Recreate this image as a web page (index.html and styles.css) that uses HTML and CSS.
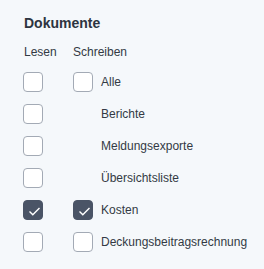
FILE: index.html
```html
<!DOCTYPE html>
<html lang="de">
<head>
    <meta charset="UTF-8">
    <meta name="viewport" content="width=device-width, initial-scale=1.0">
    <title>Dokumente</title>
    <link rel="stylesheet" href="styles.css">
</head>
<body>
    <div class="panel">
        <h3 class="title">Dokumente</h3>
        <div class="perm-head">
            <span class="col-read">Lesen</span>
            <span>Schreiben</span>
        </div>
        <div class="perm-list">
            <div class="perm-row">
                <span class="col-read"><span class="box"></span></span>
                <span class="box"></span>
                <span class="label">Alle</span>
            </div>
            <div class="perm-row">
                <span class="col-read"><span class="box"></span></span>
                <span class="box-spacer"></span>
                <span class="label">Berichte</span>
            </div>
            <div class="perm-row">
                <span class="col-read"><span class="box"></span></span>
                <span class="box-spacer"></span>
                <span class="label">Meldungsexporte</span>
            </div>
            <div class="perm-row">
                <span class="col-read"><span class="box"></span></span>
                <span class="box-spacer"></span>
                <span class="label">Übersichtsliste</span>
            </div>
            <div class="perm-row">
                <span class="col-read"><span class="box checked"><svg viewBox="0 0 18 18"><path d="M5.5 10.5l3.3 3.3 6.7-6.8"/></svg></span></span>
                <span class="box checked"><svg viewBox="0 0 18 18"><path d="M5.5 10.5l3.3 3.3 6.7-6.8"/></svg></span>
                <span class="label">Kosten</span>
            </div>
            <div class="perm-row">
                <span class="col-read"><span class="box"></span></span>
                <span class="box"></span>
                <span class="label">Deckungsbeitragsrechnung</span>
            </div>
        </div>
    </div>
</body>
</html>
```

FILE: styles.css
```css
body {
    margin: 0;
    background-color: #f5f8fb;
    font-family: "Liberation Sans", Arial, sans-serif;
    font-size: 12px;
    color: #333a44;
}
.panel {
    padding: 15px 0 0 23px;
}
.title {
    margin: 0 0 0 1px;
    font-size: 14px;
    font-weight: bold;
    color: #2d3440;
    line-height: 16px;
}
.perm-head {
    display: flex;
    margin: 14px 0 0 1px;
    line-height: 14px;
}
.perm-head .col-read {
    width: 49px;
}
.perm-list {
    display: flex;
    flex-direction: column;
    gap: 12px;
    margin-top: 13px;
}
.perm-row {
    display: flex;
    align-items: center;
    height: 20px;
}
.perm-row .col-read {
    width: 50px;
    display: flex;
}
.box, .box-spacer {
    width: 20px;
    height: 20px;
    box-sizing: border-box;
    flex: none;
}
.box {
    border: 1px solid #a3aab5;
    border-radius: 4px;
    background-color: #ffffff;
}
.box.checked {
    background-color: #4a5466;
    border-color: #4a5466;
}
.box svg {
    display: block;
    width: 18px;
    height: 18px;
}
.box svg path {
    fill: none;
    stroke: #ffffff;
    stroke-width: 1.4;
}
.label {
    margin-left: 8px;
}
```
